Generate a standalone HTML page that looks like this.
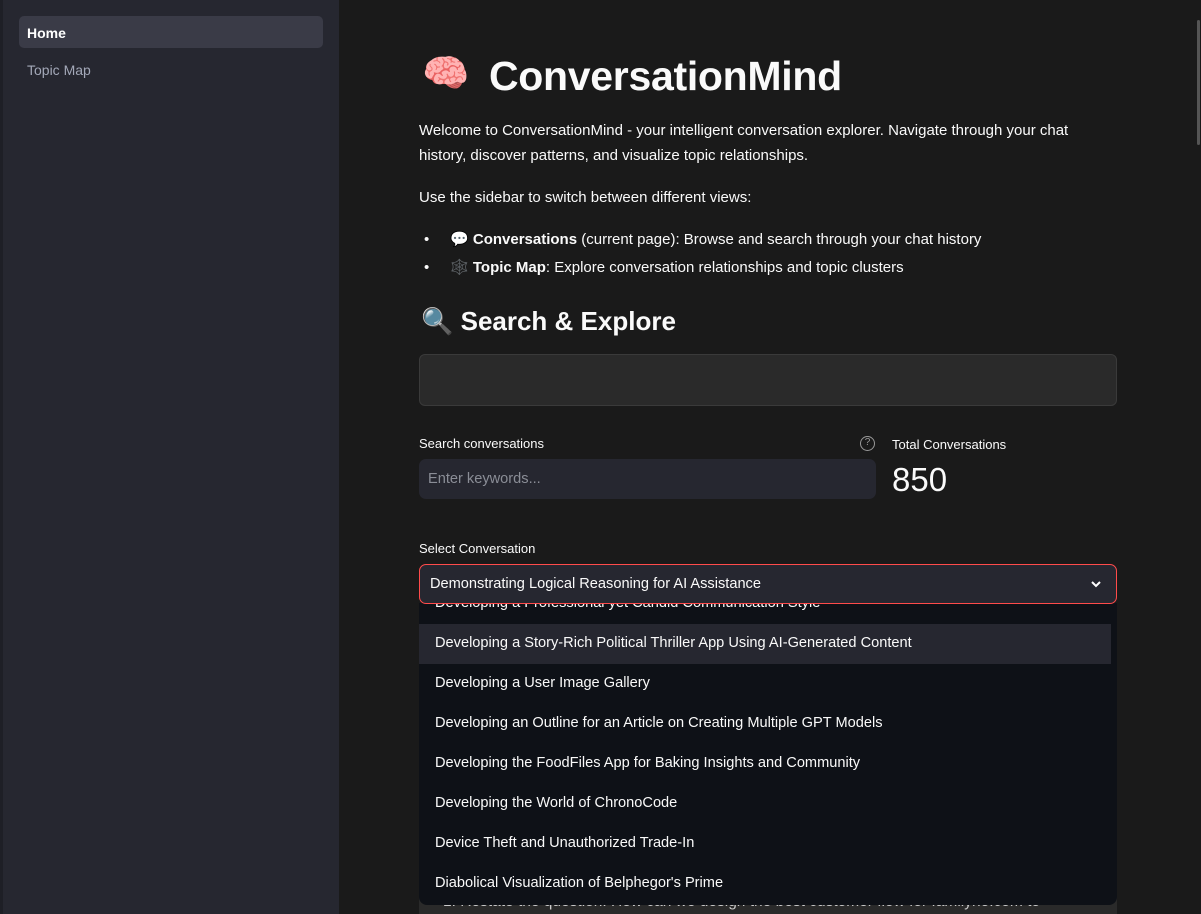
<!DOCTYPE html>
<html><head><meta charset="utf-8"><style>
*{box-sizing:border-box;margin:0;padding:0}
body{width:1201px;height:914px;overflow:hidden;background:#1a1a1a;font-family:"Liberation Sans","Noto Sans CJK SC",sans-serif;color:#fafafa;position:relative}
.side{position:absolute;left:0;top:0;width:339px;height:914px;background:#262730;border-left:3px solid #1e1f26}
.nav{position:absolute;left:19px;top:16px;width:304px;height:32px;background:#3a3b47;border-radius:5px;font-weight:bold;font-size:14px;padding:9px 8px;color:#fff}
.nav2{position:absolute;left:27px;top:62px;font-size:14px;color:#a3a8b8}
.a{position:absolute;white-space:nowrap}
p.t{font-size:15px;line-height:25px;color:#fafafa}
.dd{position:absolute;left:419px;top:603px;width:698px;height:302px;background:#0e1117;border-radius:0 0 8px 8px;overflow:hidden}
.dd div{position:absolute;left:16px;font-size:14.6px;color:#fafafa}
.sb{position:absolute;right:0;top:0;width:5px;height:914px;background:#1a1a1a}
.sbt{position:absolute;right:1px;top:20px;width:3px;height:125px;background:#555;border-radius:2px}
</style></head><body>
<div class="side"></div>
<div class="nav">Home</div>
<div class="nav2">Topic Map</div>

<div class="a" style="left:422px;top:52px;font-size:38px;">🧠</div>
<div class="a" style="left:489px;top:53px;font-size:41px;font-weight:bold;letter-spacing:-0.3px">ConversationMind</div>
<div class="a" style="left:419px;top:118px;"><p class="t">Welcome to ConversationMind - your intelligent conversation explorer. Navigate through your chat<br>history, discover patterns, and visualize topic relationships.</p></div>
<div class="a" style="left:419px;top:185px;"><p class="t">Use the sidebar to switch between different views:</p></div>
<div class="a" style="left:424px;top:227px;"><p class="t">•</p></div>
<div class="a" style="left:450px;top:227px;"><p class="t">💬 <b>Conversations</b> (current page): Browse and search through your chat history</p></div>
<div class="a" style="left:424px;top:255px;"><p class="t">•</p></div>
<div class="a" style="left:450px;top:255px;"><p class="t">🕸️ <b>Topic Map</b>: Explore conversation relationships and topic clusters</p></div>
<div class="a" style="left:421px;top:306px;font-size:26px;font-weight:bold">🔍 Search &amp; Explore</div>

<div class="a" style="left:419px;top:354px;width:698px;height:52px;background:#2a2a2a;border:1px solid #3a3a3a;border-radius:6px"></div>

<div class="a" style="left:419px;top:436px;font-size:13px">Search conversations</div>
<div class="a" style="left:860px;top:436px;width:15px;height:15px;border:1.5px solid #999;border-radius:50%;font-size:10px;color:#999;text-align:center;line-height:12px">?</div>
<div class="a" style="left:419px;top:459px;width:457px;height:40px;background:#262730;border-radius:7px;padding:12px 9px;font-size:14.6px;color:#8a8d96">Enter keywords...</div>
<div class="a" style="left:892px;top:437px;font-size:13px">Total Conversations</div>
<div class="a" style="left:892px;top:461px;font-size:33px;">850</div>

<div class="a" style="left:419px;top:541px;font-size:13px">Select Conversation</div>
<div class="a" style="left:419px;top:860px;width:698px;height:54px;background:#2a2a2a"></div>
<div class="a" style="left:443px;top:893px;font-size:15.5px;color:#ccc">1. Restate the question: How can we design the best customer flow for familyho.com to</div>
<div class="dd">
<div style="top:-8px">Developing a Professional yet Candid Communication Style</div>
<div style="left:0;top:21px;width:692px;height:40px;background:#262730"></div>
<div style="top:32px">Developing a Story-Rich Political Thriller App Using AI-Generated Content</div>
<div style="top:72px">Developing a User Image Gallery</div>
<div style="top:112px">Developing an Outline for an Article on Creating Multiple GPT Models</div>
<div style="top:152px">Developing the FoodFiles App for Baking Insights and Community</div>
<div style="top:192px">Developing the World of ChronoCode</div>
<div style="top:232px">Device Theft and Unauthorized Trade-In</div>
<div style="top:272px">Diabolical Visualization of Belphegor's Prime</div>
</div>
<div class="a" style="left:419px;top:564px;width:698px;height:40px;background:#262730;border:1px solid #ff4b4b;border-radius:7px;padding:11px 10px;font-size:14.6px">Demonstrating Logical Reasoning for AI Assistance</div>
<svg class="a" style="left:1089px;top:577px" width="14" height="14" viewBox="0 0 14 14"><path d="M3 5l4 4 4-4" stroke="#fff" stroke-width="2" fill="none"/></svg>
<div class="sb"></div><div class="sbt"></div>
</body></html>
